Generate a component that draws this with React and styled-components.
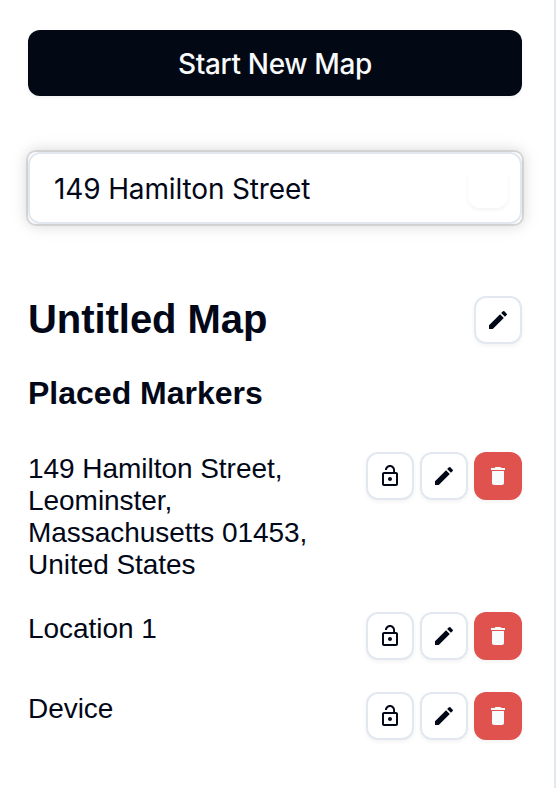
import React from "react";
import styled, { createGlobalStyle } from "styled-components";
import { MdLockOpen, MdEdit, MdDelete } from "react-icons/md";

const GlobalStyle = createGlobalStyle`
  *, *::before, *::after { box-sizing: border-box; }
  body { margin: 0; background: #fff; color: #020817; overflow: hidden; }
  button, input { margin: 0; font: inherit; color: inherit; }
`;

const Panel = styled.aside`
  width: 556px;
  height: 788px;
  padding: 30px 32px 0 28px;
  border-right: 2px solid #e2e8f0;
  background: #fff;
  font-family: "Liberation Sans", Arial, sans-serif;
`;

const StartButton = styled.button`
  display: flex;
  align-items: center;
  justify-content: center;
  width: 100%;
  height: 66px;
  padding: 2px 0 0;
  border: 0;
  border-radius: 12px;
  background: #020814;
  color: #f8fafc;
  font: 550 28px/40px Inter, sans-serif;
  letter-spacing: -0.35px;
  box-shadow: 0 2px 4px rgba(0, 0, 0, 0.05);
`;

const SearchBox = styled.div`
  display: flex;
  align-items: center;
  height: 72px;
  margin-top: 56px;
  border-radius: 8px;
  background: #fff;
  box-shadow: 0 0 20px 4px rgba(0, 0, 0, 0.05),
    0 0 12px 2px rgba(0, 0, 0, 0.1), 0 0 0 2px rgba(0, 0, 0, 0.1);
`;

const SearchField = styled.div`
  display: flex;
  align-items: center;
  width: 100%;
  height: 72px;
  padding: 0 12px 0 24px;
  border: 2px solid #e2e8f0;
  border-radius: 12px;
`;

const SearchInput = styled.input`
  flex: 1;
  min-width: 0;
  padding: 2px 0 0;
  border: 0;
  outline: 0;
  background: transparent;
  font: 400 28px/40px Inter, sans-serif;
  letter-spacing: -0.14px;
`;

const ClearButton = styled.button`
  width: 40px;
  height: 40px;
  border: 0;
  border-radius: 12px;
  background: #fff;
  box-shadow: 0 2px 4px rgba(0, 0, 0, 0.05);
`;

const TitleRow = styled.div`
  display: flex;
  align-items: center;
  justify-content: space-between;
  height: 48px;
  margin-top: 72px;
`;

const Title = styled.h1`
  margin: 0;
  padding-bottom: 2px;
  font-size: 40px;
  line-height: 48px;
  font-weight: 700;
  letter-spacing: -0.05px;
`;

const Subtitle = styled.h2`
  margin: 29px 0 0;
  font-size: 32px;
  line-height: 40px;
  font-weight: 700;
`;

const MarkerList = styled.ul`
  display: flex;
  flex-direction: column;
  gap: 32px;
  margin: 39px 0 0;
  padding: 0;
  list-style: none;
`;

const MarkerItem = styled.li`
  display: flex;
  align-items: flex-start;
  justify-content: space-between;
`;

const MarkerName = styled.span`
  width: 290px;
  margin: 1px 0 -1px;
  font-size: 28px;
  line-height: 32px;
  letter-spacing: -0.04px;
`;

const Actions = styled.div`
  display: flex;
  gap: 6px;
`;

const IconButton = styled.button`
  display: flex;
  align-items: center;
  justify-content: center;
  width: 48px;
  height: 48px;
  padding: 0;
  border: ${(p) => (p.$danger ? "0" : "2px solid #e2e8f0")};
  border-radius: 12px;
  background: ${(p) => (p.$danger ? "#df524d" : "#fff")};
  color: ${(p) => (p.$danger ? "#f8fafc" : "#020817")};
  box-shadow: 0 2px 4px rgba(0, 0, 0, 0.05);
`;

const markers = [
  "149 Hamilton Street, Leominster, Massachusetts 01453, United States",
  "Location 1",
  "Device",
];

export default function App() {
  return (
    <>
      <GlobalStyle />
      <Panel>
        <StartButton>Start New Map</StartButton>
        <SearchBox>
          <SearchField>
            <SearchInput defaultValue="149 Hamilton Street" aria-label="Search" />
            <ClearButton aria-label="Clear" />
          </SearchField>
        </SearchBox>
        <TitleRow>
          <Title>Untitled Map</Title>
          <IconButton aria-label="Rename map">
            <MdEdit size={24} />
          </IconButton>
        </TitleRow>
        <Subtitle>Placed Markers</Subtitle>
        <MarkerList>
          {markers.map((name) => (
            <MarkerItem key={name}>
              <MarkerName>{name}</MarkerName>
              <Actions>
                <IconButton aria-label="Lock">
                  <MdLockOpen size={24} />
                </IconButton>
                <IconButton aria-label="Edit">
                  <MdEdit size={24} />
                </IconButton>
                <IconButton $danger aria-label="Delete">
                  <MdDelete size={24} />
                </IconButton>
              </Actions>
            </MarkerItem>
          ))}
        </MarkerList>
      </Panel>
    </>
  );
}
